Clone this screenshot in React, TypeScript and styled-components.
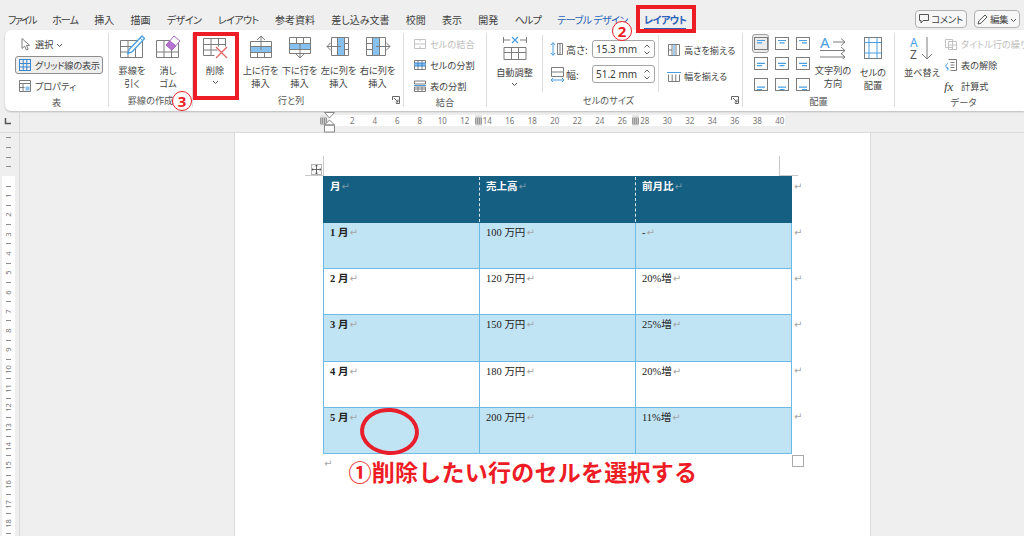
import React from "react";
import styled, { createGlobalStyle } from "styled-components";

const GlobalStyle = createGlobalStyle`
  html, body { margin: 0; padding: 0; background: #efefef; }
  #root { width: 1024px; height: 536px; overflow: hidden; }
`;

const GRAY = "#7c7c7c";
const BLUE = "#4a9fe2";
const LIGHT = "#86c1f0";

const Screen = styled.div`
  position: relative;
  width: 1024px;
  height: 536px;
  overflow: hidden;
  background: #efefef;
  color: #444;
  font-family: "Noto Sans CJK JP", "Noto Sans", sans-serif;
  font-feature-settings: "palt";
  font-size: 10px;
`;

const MenuBar = styled.div`
  height: 30px;
  box-sizing: border-box;
  padding: 8px 4px 0 8px;
  display: flex;
  align-items: center;
`;

const Tab = styled.div<{ $kind?: "context" | "active"; $tight?: number }>`
  margin-right: 16.3px;
  white-space: nowrap;
  position: relative;
  letter-spacing: ${(p) => p.$tight ?? 0}px;
  color: ${(p) => (p.$kind ? "#2a62b8" : "#3d3d3d")};
  font-weight: ${(p) => (p.$kind === "active" ? 700 : 400)};
  ${(p) =>
    p.$kind === "active" &&
    `&::after { content: ""; position: absolute; left: 0; right: 0; bottom: -3px; height: 2px; background: #2a62b8; }`}
`;

const Spacer = styled.div`
  flex: 1;
`;

const TopButton = styled.div<{ $w: number }>`
  width: ${(p) => p.$w}px;
  height: 18px;
  box-sizing: border-box;
  border: 1px solid #b0b0b0;
  border-radius: 4px;
  background: #f7f7f7;
  margin-left: 7px;
  display: flex;
  align-items: center;
  justify-content: center;
  gap: 2px;
  white-space: nowrap;
  font-size: 9.5px;
  letter-spacing: -0.4px;
`;

const Ribbon = styled.div`
  height: 81px;
  box-sizing: border-box;
  margin-left: 5px;
  padding: 3px 0 1px;
  display: flex;
  background: #fff;
  border-radius: 6px 0 0 6px;
  box-shadow: 0 1px 2px rgba(0, 0, 0, 0.22);
  overflow: hidden;
  font-size: 9.2px;
`;

const Group = styled.div<{ $w: number; $last?: boolean }>`
  position: relative;
  width: ${(p) => p.$w}px;
  flex: none;
  box-sizing: border-box;
  display: flex;
  flex-direction: column;
  height: 74px;
  border-right: ${(p) => (p.$last ? "none" : "1px solid #dcdcdc")};
`;

const GroupBody = styled.div<{ $left?: number }>`
  height: 64px;
  display: flex;
  padding-left: ${(p) => p.$left ?? 0}px;
`;

const GroupLabel = styled.div<{ $left?: number; $right?: number }>`
  height: 13px;
  line-height: 13px;
  text-align: center;
  color: #555;
  padding-left: ${(p) => p.$left ?? 0}px;
  padding-right: ${(p) => p.$right ?? 0}px;
`;

const Launcher = styled.div`
  position: absolute;
  right: 3px;
  bottom: 3px;
  width: 8px;
  height: 8px;
  display: flex;
`;

const BigButton = styled.div<{ $w: number; $pull?: number }>`
  width: ${(p) => p.$w}px;
  margin-left: ${(p) => p.$pull ?? 0}px;
  flex: none;
  display: flex;
  flex-direction: column;
  align-items: center;
  padding-top: 2px;
  line-height: 13px;
  text-align: center;
  white-space: nowrap;
  svg:first-child {
    margin-bottom: 5px;
  }
`;

const Gap = styled.div<{ $w: number }>`
  width: ${(p) => p.$w}px;
  flex: none;
`;

const SmallCol = styled.div`
  display: flex;
  flex-direction: column;
`;

const SmallRow = styled.div<{ $off?: boolean }>`
  height: 21px;
  display: flex;
  align-items: center;
  gap: 3px;
  white-space: nowrap;
  color: ${(p) => (p.$off ? "#bdbdbd" : "#444")};
`;

const ActiveRow = styled(SmallRow)`
  width: 88px;
  height: 18px;
  margin: 2px 0 1px -3px;
  padding-left: 2px;
  box-sizing: border-box;
  gap: 3px;
  letter-spacing: -0.25px;
  background: #efefef;
  border: 1px solid #8e8e8e;
  border-radius: 3px;
`;

const InnerDivider = styled.div`
  width: 1px;
  height: 57px;
  margin-top: 2px;
  background: #dcdcdc;
  flex: none;
`;

const SizeCol = styled.div`
  display: flex;
  flex-direction: column;
  gap: 7px;
  padding: 7px 0 0 7px;
  width: 108px;
`;

const SizeRow = styled.div`
  display: flex;
  align-items: center;
  height: 18px;
`;

const SizeName = styled.span`
  width: 26px;
  margin-left: 2px;
  white-space: nowrap;
  font-size: 10px;
`;

const SpinBox = styled.div`
  width: 63px;
  height: 18px;
  box-sizing: border-box;
  border: 1px solid #a5a5a5;
  border-radius: 3px;
  padding-left: 3px;
  display: flex;
  align-items: center;
  justify-content: space-between;
  font-family: "Noto Sans", sans-serif;
  font-size: 10px;
  color: #3c3c3c;
`;

const SpinArrows = styled.div`
  display: flex;
  flex-direction: column;
  gap: 3px;
  margin-right: 4px;
`;

const EvenCol = styled.div`
  display: flex;
  flex-direction: column;
  gap: 5px;
  padding: 6px 0 0 8px;
`;

const AlignGrid = styled.div`
  width: 63px;
  flex: none;
  display: grid;
  grid-template-columns: repeat(3, 21px);
  grid-auto-rows: 20.5px;
`;

const AlignCell = styled.div<{ $on?: boolean }>`
  display: flex;
  align-items: center;
  justify-content: center;
  margin: 1px 2px;
  border-radius: 3px;
  background: ${(p) => (p.$on ? "#ebebeb" : "transparent")};
  border: 1px solid ${(p) => (p.$on ? "#a0a0a0" : "transparent")};
`;

const RulerBar = styled.div`
  position: relative;
  height: 22px;
  box-sizing: border-box;
  display: flex;
  border-bottom: 1px solid #dadada;
`;

const RulerCorner = styled.div`
  width: 20px;
  flex: none;
  box-sizing: border-box;
  border-right: 1px solid #dadada;
  display: flex;
  align-items: center;
  justify-content: center;
  padding-right: 4px;
`;

const RulerTrack = styled.div`
  width: 455px;
  height: 11px;
  margin: 4px 0 0 310px;
  padding-left: 11px;
  box-sizing: border-box;
  background: #fff;
  display: flex;
`;

const RulerNum = styled.span`
  width: 22.5px;
  flex: none;
  text-align: center;
  font-family: "Noto Sans", sans-serif;
  font-size: 8px;
  line-height: 11px;
  color: #777;
`;

const RulerMark = styled.div<{ $x: number }>`
  position: absolute;
  top: 4px;
  left: ${(p) => p.$x}px;
  width: 7px;
  height: 11px;
  background: #e6e6e6;
  display: flex;
  align-items: center;
`;

const IndentMark = styled.div`
  position: absolute;
  left: 324px;
  top: 1px;
  display: flex;
`;

const Workspace = styled.div`
  display: flex;
  height: 404px;
`;

const VRuler = styled.div`
  width: 20px;
  flex: none;
  box-sizing: border-box;
  border-right: 1px solid #dadada;
  padding-left: 2px;
`;

const VTrack = styled.div`
  width: 13px;
  height: 404px;
  overflow: hidden;
  background: linear-gradient(#efefef 43px, #fff 43px);
`;

const VStep = styled.div`
  height: 9.65px;
  display: flex;
  align-items: center;
  justify-content: center;
`;

const VTick = styled.div`
  width: 5px;
  height: 1px;
  background: #8c8c8c;
`;

const VNum = styled.span`
  display: block;
  transform: rotate(-90deg);
  font-family: "Noto Sans", sans-serif;
  font-size: 7.5px;
  line-height: 9px;
  color: #777;
`;

const Canvas = styled.div`
  flex: 1;
  padding-left: 214px;
`;

const Page = styled.div`
  width: 637px;
  height: 404px;
  box-sizing: border-box;
  padding: 43px 0 0 88px;
  background: #fff;
  border-left: 1px solid #dcdcdc;
  border-right: 1px solid #dcdcdc;
`;

const TableWrap = styled.div`
  position: relative;
  width: 468px;
`;

const WordTable = styled.table`
  width: 480px;
  height: 278px;
  table-layout: fixed;
  border-collapse: collapse;
  font-family: "Liberation Serif", "Noto Sans CJK JP", serif;
  font-size: 10.5px;
  color: #222;
`;

const Cell = styled.td<{ $tone: "head" | "band" | "plain" }>`
  width: 156px;
  box-sizing: border-box;
  vertical-align: top;
  padding: 2px 6px;
  line-height: 15px;
  background: ${(p) => (p.$tone === "head" ? "#156082" : p.$tone === "band" ? "#c1e4f5" : "#fff")};
  color: ${(p) => (p.$tone === "head" ? "#fff" : "#222")};
  border: 1px solid #6bbbe6;
  ${(p) =>
    p.$tone === "head" &&
    `border-top-color: #156082;
     border-bottom-color: #156082;
     border-left: 1px dashed #dbe8ee;
     border-right: 1px dashed #dbe8ee;
     font-weight: 700;
     &:first-child { border-left: 1px solid #156082; }
     &:nth-child(3) { border-right: 1px solid #156082; }`}
`;

const FirstCol = styled.strong`
  font-weight: 700;
`;

const RowEnd = styled.td`
  width: 12px;
  border: none;
  padding: 2px 0 0 1px;
  vertical-align: top;
  line-height: 15px;
`;

const Pilcrow = styled.span<{ $dim?: boolean }>`
  font-family: "DejaVu Sans", sans-serif;
  font-size: 10px;
  font-weight: 400;
  margin-left: 1px;
  color: ${(p) => (p.$dim ? "#7b9aaa" : "#a5a5a5")};
`;

const EndMark = styled(Pilcrow)`
  margin-top: 4px;
`;

const MoveHandle = styled.div`
  position: absolute;
  left: -12px;
  top: -12px;
  width: 11px;
  height: 11px;
  box-sizing: border-box;
  border: 1px solid #b5b5b5;
  background: #fff;
  display: flex;
`;

const CropV = styled.div<{ $left: number }>`
  position: absolute;
  top: -20px;
  left: ${(p) => p.$left}px;
  width: 1px;
  height: 20px;
  background: #c9c9c9;
`;

const CropH = styled.div<{ $left: number }>`
  position: absolute;
  top: -1px;
  left: ${(p) => p.$left}px;
  width: 19px;
  height: 1px;
  background: #c9c9c9;
`;

const SizeHandle = styled.div`
  position: absolute;
  right: -13px;
  bottom: -13px;
  width: 12px;
  height: 12px;
  box-sizing: border-box;
  border: 1px solid #aaa;
  background: #fff;
`;

const AfterPara = styled.div`
  display: flex;
  align-items: flex-start;
  height: 30px;
`;

const Caption = styled.div`
  margin: 2px 0 0 16px;
  font-size: 23px;
  line-height: 30px;
  font-weight: 700;
  font-feature-settings: normal;
  letter-spacing: 0.25px;
  white-space: nowrap;
  color: #ee1c25;
`;

const DeleteBox = styled.div`
  position: absolute;
  left: 193px;
  top: 32px;
  width: 46px;
  height: 68px;
  box-sizing: border-box;
  border: 4px solid #ee1c25;
`;

const TabBox = styled.div`
  position: absolute;
  left: 636px;
  top: 5px;
  width: 60px;
  height: 28px;
  box-sizing: border-box;
  border: 4px solid #ee1c25;
`;

const Step = styled.div<{ $x: number; $y: number }>`
  position: absolute;
  left: ${(p) => p.$x}px;
  top: ${(p) => p.$y}px;
  width: 20px;
  height: 20px;
  box-sizing: border-box;
  border: 1px solid #ee1c25;
  border-radius: 50%;
  background: #fff;
  color: #ee1c25;
  font-family: "Noto Sans", sans-serif;
  font-size: 15px;
  font-weight: 700;
  line-height: 18px;
  text-align: center;
`;

const CellCircle = styled.div`
  position: absolute;
  left: 360px;
  top: 408px;
  width: 59px;
  height: 47px;
  box-sizing: border-box;
  border: 4px solid #e81f2a;
  border-radius: 50%;
  transform: rotate(4deg);
`;

function Icon({ w, h, children }: { w: number; h: number; children?: React.ReactNode }) {
  return (
    <svg width={w} height={h} viewBox={`0 0 ${w} ${h}`} fill="none" stroke={GRAY} strokeWidth="1" style={{ flex: "none" }}>
      {children}
    </svg>
  );
}

function Chevron() {
  return (
    <svg width="7" height="5" viewBox="0 0 7 5" fill="none" stroke="#555" strokeWidth="1" style={{ marginTop: 3 }}>
      <path d="M1 1l2.5 2.5L6 1" />
    </svg>
  );
}

const DrawIcon = () => (
  <Icon w={26} h={24}>
    <path d="M1.5 5.5h22v17h-22zM1.5 11.5h15M1.5 17h10M9 5.5v17M16.5 14v8.5" />
    <path d="M23 1l2.5 2.5L13 17l-4 1.5 1-4z" fill="#fff" stroke={BLUE} strokeWidth="1.4" />
    <path d="M21 3l2.5 2.5" stroke={BLUE} />
  </Icon>
);

const EraserIcon = () => (
  <Icon w={26} h={24}>
    <path d="M1.5 5.5h22v17h-22zM1.5 17h22M9 5.5v17M16.5 14v8.5" />
    <path d="M19 1l6 5-8 9-6-5z" fill="#fff" stroke="#a765c4" />
    <path d="M15 6l6 5-4 4-6-5z" fill="#b673d2" stroke="#a765c4" />
  </Icon>
);

const DeleteIcon = () => (
  <Icon w={26} h={24}>
    <path d="M1.5 3.5h22v8M1.5 3.5v17h11M1.5 9.5h22M1.5 15h14M9 3.5v17M16.5 3.5v8" />
    <path d="M14 12l11 11M25 12L14 23" stroke="#e8666c" strokeWidth="1.4" />
  </Icon>
);

const RowInsertIcon = ({ up }: { up?: boolean }) => (
  <Icon w={24} h={24}>
    <rect x="1.5" y={up ? 11.5 : 8.5} width="21" height="6" fill={LIGHT} stroke="none" />
    <path d={up ? "M1.5 6.5h21v16h-21zM1.5 11.5h21M1.5 17.5h21M8.5 17.5v5M15.5 17.5v5" : "M1.5 2.500h21v16h-21zM1.5 8.5h21M1.5 14.5h21M8.5 2.500v6M15.5 2.500v6"} />
    <path d={up ? "M12 15V1M8 5l4-4 4 4" : "M12 9v14M8 19l4 4 4-4"} fill="none" />
  </Icon>
);

const ColInsertIcon = ({ left }: { left?: boolean }) => (
  <Icon w={26} h={24}>
    <rect x={left ? 11.5 : 7.5} y="2.500" width="7" height="18" fill={LIGHT} stroke="none" />
    <path d={left ? "M5.5 2.500h17v18h-17zM11.5 2.500v18M18.5 2.500v18M18.5 8.5h4M18.5 14.5h4" : "M1.5 2.500h19v18h-19zM7.5 2.500v18M14.5 2.500v18M1.5 8.5h6M1.5 14.5h6"} />
    <path d={left ? "M15 11.5H1M5 7.5l-4 4 4 4" : "M11 11.5h14M21 7.5l4 4-4 4"} />
  </Icon>
);

const AutoFitIcon = () => (
  <Icon w={26} h={26}>
    <path d="M2 12.5h22v12h-22zM2 17.5h22M9.5 12.5v12M16.5 12.5v12" />
    <path d="M1.5 2v6M24.5 2v6M2 5h6M18 5h6" />
    <path d="M10 2l6 6M16 2l-6 6" stroke={BLUE} strokeWidth="1.2" />
  </Icon>
);

const SmallGrid = ({ blue }: { blue?: boolean }) => (
  <Icon w={14} h={14}>
    <rect x="1.5" y="1.5" width="11" height="11" stroke={blue ? "#3c86cf" : GRAY} />
    <path d="M1.5 5.5h11M1.5 9h11M5.2 1.5v11M8.8 1.5v11" stroke={blue ? "#3c86cf" : GRAY} />
  </Icon>
);

const PropertyIcon = () => (
  <Icon w={14} h={14}>
    <path d="M1.5 1.5h11v11h-11zM1.5 4.5h11M1.5 8.5h5M5 4.5v8" />
    <rect x="7.5" y="7.5" width="4" height="4" fill={LIGHT} stroke="none" />
  </Icon>
);

const PointerIcon = () => (
  <Icon w={14} h={14}>
    <path d="M4 1.5v10l2.6-2.4 1.8 3.9 1.8-.8-1.8-3.8h3.2z" fill="#fff" />
  </Icon>
);

const MergeIcon = () => (
  <Icon w={14} h={14}>
    <path d="M1.5 2.500h11v9h-11zM1.5 7h11M7 2.500v2M7 9v2.500" stroke="#c2c2c2" />
  </Icon>
);

const SplitCellIcon = () => (
  <Icon w={14} h={14}>
    <path d="M1.5 2.500h11v9h-11zM1.5 7h11M5 2.500v9M9 2.500v9" stroke={GRAY} />
    <rect x="1.5" y="5" width="11" height="3" fill={LIGHT} stroke="none" />
    <path d="M1.5 5h11M1.5 8h11M5 5v3M9 5v3" stroke="#3c86cf" />
  </Icon>
);

const SplitTableIcon = () => (
  <Icon w={14} h={14}>
    <path d="M1.5 2h11v3h-11zM1.5 8h11v4.500h-11zM5 8v4.500M9 8v4.500M1.5 10h11" />
    <path d="M1 6.500h12" stroke={BLUE} />
  </Icon>
);

const HeightIcon = () => (
  <Icon w={14} h={18}>
    <path d="M3 3v12M1 5l2-2.500 2 2.500M1 13l2 2.500 2-2.500" stroke={BLUE} />
    <path d="M7.500 3.500h5v11h-5zM10 3.500v11" />
  </Icon>
);

const WidthIcon = () => (
  <Icon w={14} h={18}>
    <path d="M1.500 2.500h12v9h-12zM1.500 7h12" />
    <path d="M1 15h13M3 13l-2 2 2 2M12 13l2 2-2 2" stroke={BLUE} />
  </Icon>
);

const EvenRowsIcon = () => (
  <Icon w={14} h={14}>
    <path d="M1.500 1.500h11v11h-11zM5 1.500v11M9 1.500v11M1.500 7h3.500" />
    <path d="M7 1v12" stroke={BLUE} />
  </Icon>
);

const EvenColsIcon = () => (
  <Icon w={14} h={14}>
    <path d="M1.500 5.500v7M12.500 5.500v7M1.500 12.500h11M5.200 5.500v7M8.800 5.500v7" />
    <path d="M0 3.500h14" stroke={BLUE} />
  </Icon>
);

const AlignIcon = ({ row, col }: { row: number; col: number }) => {
  const y = 3.5 + row * 2.8;
  const x1 = col === 2 ? 6 : col === 1 ? 4.5 : 3;
  return (
    <Icon w={14} h={13}>
      <rect x="0.5" y="0.5" width="13" height="12" />
      <path d={`M3 ${y}h8`} stroke={BLUE} strokeWidth="1.2" />
      <path d={`M${x1} ${y + 2.4}h5`} stroke={BLUE} strokeWidth="1.2" />
    </Icon>
  );
};

const TextDirIcon = () => (
  <Icon w={28} h={24}>
    <text x="1" y="13" fontFamily="Noto Sans" fontSize="15" fill={BLUE} stroke="none">A</text>
    <path d="M14 7h12M22 3.500l4 3.500-4 3.500M1 15.500h25M22 12l4 3.500-4 3.500M1 22h25M22 18.500l4 3.500-4 3.500" />
  </Icon>
);

const CellAlignIcon = () => (
  <Icon w={22} h={26}>
    <rect x="2.500" y="2.500" width="17" height="21" />
    <path d="M2.500 7.500h17M2.500 18h17M7 2.500v21M15 2.500v21" stroke={BLUE} />
  </Icon>
);

const SortIcon = () => (
  <Icon w={30} h={26}>
    <text x="3" y="12" fontFamily="Noto Sans" fontSize="12" fill={BLUE} stroke="none">A</text>
    <text x="3" y="24" fontFamily="Noto Sans" fontSize="12" fill="#555" stroke="none">Z</text>
    <path d="M20 2v22M15 19l5 5 5-5" />
  </Icon>
);

const RepeatIcon = () => (
  <Icon w={14} h={14}>
    <path d="M1.500 2.500h7v8h-7zM4.500 4.500h8v8h-8zM4.500 8h8M8.500 4.500v8" stroke="#c2c2c2" />
  </Icon>
);

const ConvertIcon = () => (
  <Icon w={14} h={14}>
    <path d="M4.500 1.500h8v11h-6M6.500 4.500h4M6.500 7h4M6.500 9.500h4" />
    <path d="M4 5.500C1.500 6 1 10 4 11M3 9l1.500 2L3 12.500" stroke={BLUE} />
  </Icon>
);

const Launch = () => (
  <Launcher>
    <svg width="8" height="8" viewBox="0 0 8 8" fill="none" stroke="#666" strokeWidth="1">
      <path d="M.5 4V.5H7.500V7.500H4M2 2l4 4M3.500 6H6V3.500" />
    </svg>
  </Launcher>
);

const CellMarker = () => (
  <svg width="7" height="8" viewBox="0 0 7 8" fill="none" stroke="#8a8a8a" strokeWidth="0.8">
    <path d="M.5 1h6v6h-6zM.5 3h6M.5 5h6M2.500 1v6M4.500 1v6" />
  </svg>
);

const SpinPair = () => (
  <SpinArrows>
    <svg width="6" height="4" viewBox="0 0 6 4" fill="none" stroke="#666"><path d="M.5 3.500L3 1l2.500 2.500" /></svg>
    <svg width="6" height="4" viewBox="0 0 6 4" fill="none" stroke="#666"><path d="M.5.500L3 3 5.500.500" /></svg>
  </SpinArrows>
);

const MENU: { label: string; tight?: number }[] = [
  { label: "ファイル", tight: -1.7 },
  { label: "ホーム", tight: -0.95 },
  { label: "挿入" },
  { label: "描画" },
  { label: "デザイン", tight: -0.5 },
  { label: "レイアウト", tight: -0.55 },
  { label: "参考資料" },
  { label: "差し込み文書" },
  { label: "校閲" },
  { label: "表示" },
  { label: "開発" },
  { label: "ヘルプ", tight: -0.8 },
];
const RULER_NUMS = Array.from({ length: 20 }, (_, i) => (i + 1) * 2);
const V_STEPS = Array.from({ length: 42 }, (_, i) => i);

const ROWS: { tone: "band" | "plain"; cells: string[] }[] = [
  { tone: "band", cells: ["1 月", "100 万円", "-"] },
  { tone: "plain", cells: ["2 月", "120 万円", "20%増"] },
  { tone: "band", cells: ["3 月", "150 万円", "25%増"] },
  { tone: "plain", cells: ["4 月", "180 万円", "20%増"] },
  { tone: "band", cells: ["5 月", "200 万円", "11%増"] },
];

export default function App() {
  return (
    <Screen>
      <GlobalStyle />
      <MenuBar>
        {MENU.map((m) => (
          <Tab key={m.label} $tight={m.tight}>{m.label}</Tab>
        ))}
        <Tab $kind="context" $tight={-0.55}>テーブル デザイン</Tab>
        <Tab $kind="active" $tight={-0.6}>レイアウト</Tab>
        <Spacer />
        <TopButton $w={52}>
          <svg width="10" height="10" viewBox="0 0 10 10" fill="none" stroke="#555">
            <path d="M.5.5h9v6H4L2 9V6.500H.5z" />
          </svg>
          コメント
        </TopButton>
        <TopButton $w={46}>
          <svg width="11" height="11" viewBox="0 0 11 11" fill="none" stroke="#555">
            <path d="M1 10l.8-3L8 1l2 2-6 6.200z" />
          </svg>
          編集
          <Chevron />
        </TopButton>
      </MenuBar>

      <Ribbon>
        <Group $w={104}>
          <GroupBody $left={13}>
            <SmallCol>
              <SmallRow>
                <PointerIcon />
                選択
                <Chevron />
              </SmallRow>
              <ActiveRow>
                <SmallGrid blue />
                グリッド線の表示
              </ActiveRow>
              <SmallRow>
                <PropertyIcon />
                プロパティ
              </SmallRow>
            </SmallCol>
          </GroupBody>
          <GroupLabel>表</GroupLabel>
        </Group>

        <Group $w={84}>
          <GroupBody $left={5}>
            <BigButton $w={36}>
              <DrawIcon />
              罫線を
              <br />
              引く
            </BigButton>
            <BigButton $w={36}>
              <EraserIcon />
              消し
              <br />
              ゴム
            </BigButton>
          </GroupBody>
          <GroupLabel>罫線の作成</GroupLabel>
        </Group>

        <Group $w={211}>
          <GroupBody>
            <BigButton $w={44}>
              <DeleteIcon />
              削除
              <Chevron />
            </BigButton>
            <Gap $w={4} />
            <BigButton $w={39}>
              <RowInsertIcon up />
              上に行を
              <br />
              挿入
            </BigButton>
            <BigButton $w={39}>
              <RowInsertIcon />
              下に行を
              <br />
              挿入
            </BigButton>
            <BigButton $w={39}>
              <ColInsertIcon left />
              左に列を
              <br />
              挿入
            </BigButton>
            <BigButton $w={39}>
              <ColInsertIcon />
              右に列を
              <br />
              挿入
            </BigButton>
          </GroupBody>
          <GroupLabel $right={14}>行と列</GroupLabel>
          <Launch />
        </Group>

        <Group $w={83}>
          <GroupBody $left={9}>
            <SmallCol>
              <SmallRow $off>
                <MergeIcon />
                セルの結合
              </SmallRow>
              <SmallRow>
                <SplitCellIcon />
                セルの分割
              </SmallRow>
              <SmallRow>
                <SplitTableIcon />
                表の分割
              </SmallRow>
            </SmallCol>
          </GroupBody>
          <GroupLabel>結合</GroupLabel>
        </Group>

        <Group $w={256}>
          <GroupBody>
            <BigButton $w={55}>
              <AutoFitIcon />
              自動調整
              <Chevron />
            </BigButton>
            <InnerDivider />
            <SizeCol>
              <SizeRow>
                <HeightIcon />
                <SizeName>高さ:</SizeName>
                <SpinBox>
                  15.3 mm
                  <SpinPair />
                </SpinBox>
              </SizeRow>
              <SizeRow>
                <WidthIcon />
                <SizeName>幅:</SizeName>
                <SpinBox>
                  51.2 mm
                  <SpinPair />
                </SpinBox>
              </SizeRow>
            </SizeCol>
            <InnerDivider />
            <EvenCol>
              <SmallRow>
                <EvenRowsIcon />
                高さを揃える
              </SmallRow>
              <SmallRow>
                <EvenColsIcon />
                幅を揃える
              </SmallRow>
            </EvenCol>
          </GroupBody>
          <GroupLabel $right={12}>セルのサイズ</GroupLabel>
          <Launch />
        </Group>

        <Group $w={152}>
          <GroupBody $left={7}>
            <AlignGrid>
              {[0, 1, 2].flatMap((row) =>
                [0, 1, 2].map((col) => (
                  <AlignCell key={`${row}-${col}`} $on={row === 0 && col === 0}>
                    <AlignIcon row={row} col={col} />
                  </AlignCell>
                ))
              )}
            </AlignGrid>
            <BigButton $w={44} $pull={-2}>
              <TextDirIcon />
              文字列の
              <br />
              方向
            </BigButton>
            <BigButton $w={36}>
              <CellAlignIcon />
              セルの
              <br />
              配置
            </BigButton>
          </GroupBody>
          <GroupLabel>配置</GroupLabel>
        </Group>

        <Group $w={129} $last>
          <GroupBody $left={5}>
            <BigButton $w={44}>
              <SortIcon />
              並べ替え
            </BigButton>
            <SmallCol>
              <SmallRow $off>
                <RepeatIcon />
                タイトル行の繰り
              </SmallRow>
              <SmallRow>
                <ConvertIcon />
                表の解除
              </SmallRow>
              <SmallRow>
                <Icon w={14} h={14}>
                  <text x="0" y="12" fontFamily="Liberation Serif" fontStyle="italic" fontSize="13" fill="#444" stroke="none">fx</text>
                </Icon>
                計算式
              </SmallRow>
            </SmallCol>
          </GroupBody>
          <GroupLabel $left={28} $right={20}>データ</GroupLabel>
        </Group>
      </Ribbon>

      <RulerBar>
        <RulerCorner>
          <svg width="7" height="7" viewBox="0 0 7 7" fill="none" stroke="#555" strokeWidth="1.500">
            <path d="M1.500 0v5.500H7" />
          </svg>
        </RulerCorner>
        <RulerTrack>
          {RULER_NUMS.map((n) => (
            <RulerNum key={n}>{n}</RulerNum>
          ))}
        </RulerTrack>
        <RulerMark $x={320}><CellMarker /></RulerMark>
        <RulerMark $x={475}><CellMarker /></RulerMark>
        <RulerMark $x={632}><CellMarker /></RulerMark>
        <IndentMark>
          <svg width="11" height="21" viewBox="0 0 11 21" fill="#fff" stroke="#888" strokeWidth="1">
            <path d="M.5.500h10L5.500 6zM5.500 8l5 5H.5zM.5 13h10v7H.5z" />
          </svg>
        </IndentMark>
      </RulerBar>

      <Workspace>
        <VRuler>
          <VTrack>
            {V_STEPS.map((i) => (
              <VStep key={i}>
                {i === 4 ? null : i < 4 || i % 2 === 1 ? <VTick /> : <VNum>{(i - 4) / 2}</VNum>}
              </VStep>
            ))}
          </VTrack>
        </VRuler>
        <Canvas>
          <Page>
            <TableWrap>
              <MoveHandle>
                <svg width="9" height="9" viewBox="0 0 9 9" fill="none" stroke="#444" strokeWidth="0.8">
                  <path d="M4.500 0v9M0 4.500h9M3.300 1.300L4.500 0l1.200 1.300M3.300 7.700L4.500 9l1.200-1.300M1.300 3.300L0 4.500l1.300 1.200M7.700 3.300L9 4.500 7.700 5.700" />
                </svg>
              </MoveHandle>
              <CropV $left={0} />
              <CropH $left={-18} />
              <CropV $left={456} />
              <CropH $left={456} />
              <WordTable>
                <tbody>
                  <tr>
                    <Cell $tone="head">月<Pilcrow $dim>↵</Pilcrow></Cell>
                    <Cell $tone="head">売上高<Pilcrow $dim>↵</Pilcrow></Cell>
                    <Cell $tone="head">前月比<Pilcrow $dim>↵</Pilcrow></Cell>
                    <RowEnd><Pilcrow>↵</Pilcrow></RowEnd>
                  </tr>
                  {ROWS.map((row) => (
                    <tr key={row.cells[0]}>
                      <Cell $tone={row.tone}><FirstCol>{row.cells[0]}</FirstCol><Pilcrow>↵</Pilcrow></Cell>
                      <Cell $tone={row.tone}>{row.cells[1]}<Pilcrow>↵</Pilcrow></Cell>
                      <Cell $tone={row.tone}>{row.cells[2]}<Pilcrow>↵</Pilcrow></Cell>
                      <RowEnd><Pilcrow>↵</Pilcrow></RowEnd>
                    </tr>
                  ))}
                </tbody>
              </WordTable>
              <SizeHandle />
            </TableWrap>
            <AfterPara>
              <EndMark>↵</EndMark>
              <Caption>①削除したい行のセルを選択する</Caption>
            </AfterPara>
          </Page>
        </Canvas>
      </Workspace>

      <DeleteBox />
      <TabBox />
      <Step $x={172} $y={91}>3</Step>
      <Step $x={612} $y={21}>2</Step>
      <CellCircle />
    </Screen>
  );
}
